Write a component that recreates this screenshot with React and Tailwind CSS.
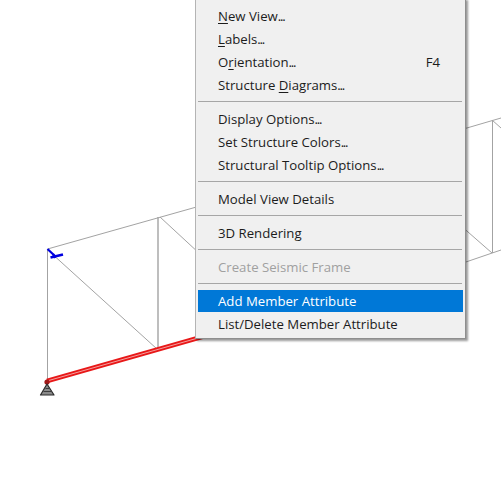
function Row({ children, right, tone = "text-[#1c1c1c]", bg = "", h = "h-[23px]" }) {
  return (
    <div className={`${h} flex items-center justify-between pl-5 pr-[23px] ${tone} ${bg}`}>
      <span>{children}</span>
      {right ? <span>{right}</span> : null}
    </div>
  );
}

function Sep() {
  return <div className="h-px bg-[#a6a6a6] mt-[4px] mb-[6px] mr-[1px]" />;
}

function U({ children }) {
  return <span className="underline underline-offset-2 decoration-1">{children}</span>;
}

function Dots() {
  return <span className="tracking-[-1.3px]">...</span>;
}

function Drawing() {
  return (
    <svg width="501" height="479" viewBox="0 0 501 479" className="block">
      <g stroke="#a3a3a3" strokeWidth="1" fill="none">
        <path d="M47.5 249V381" />
        <path d="M47.5 249L200 206" />
        <path d="M158 217V349" strokeWidth="1.4" />
        <path d="M50 252L157 349" />
        <path d="M160 217L200 254" />
        <path d="M460 130L501 118" />
        <path d="M492.5 120V253" />
        <path d="M460 225L492 253" />
        <path d="M460 264L501 250" />
        <path d="M492 120L501 128" />
      </g>
      <path d="M47 381L205 336" stroke="#e81818" strokeWidth="4.8" fill="none" />
      <path d="M47 381L205 336" stroke="#f5b0b0" strokeWidth="0.9" fill="none" />
      <circle cx="47" cy="382" r="2.6" fill="#a01818" />
      <g stroke="#0000e0" fill="none">
        <path d="M47.5 249L56 257" strokeWidth="2.2" />
        <path d="M50.5 257.5L63 254.5" strokeWidth="2.8" />
        <path d="M53 254L55 258" strokeWidth="2.2" />
      </g>
      <path d="M47 384L40.5 395H54Z" fill="#8a8a8a" stroke="#2a2a2a" strokeWidth="1.2" strokeLinejoin="round" />
      <path d="M43.5 391.5H51M45.5 388.5H49.5" stroke="#3c3c3c" strokeWidth="1" />
    </svg>
  );
}

export default function App() {
  return (
    <div className="relative w-[501px] h-[479px] bg-white overflow-hidden">
      <Drawing />
      <div
        className="absolute left-[195px] top-[-2px] w-[271px] pt-[6px] pb-[2px] px-[2px] bg-[#f0f0f0] border border-[#b4b4b4] border-r-[#8e8e8e] border-b-[#8e8e8e] shadow-[2px_2px_2px_rgba(0,0,0,0.4)] text-[13.2px] leading-[23px]"
        style={{ fontFamily: '"Open Sans", "Noto Sans", sans-serif' }}
      >
        <Row><U>N</U>ew View<Dots /></Row>
        <Row><U>L</U>abels<Dots /></Row>
        <Row right="F4">O<U>r</U>ientation<Dots /></Row>
        <Row>Structure <U>D</U>iagrams<Dots /></Row>
        <Sep />
        <Row>Display Options<Dots /></Row>
        <Row>Set Structure Colors<Dots /></Row>
        <Row>Structural Tooltip Options<Dots /></Row>
        <Sep />
        <Row>Model View Details</Row>
        <Sep />
        <Row>3D Rendering</Row>
        <Sep />
        <Row tone="text-[#a0a0a0]">Create Seismic Frame</Row>
        <Sep />
        <Row tone="text-white" bg="bg-[#0078d7]" h="h-[22px]">Add Member Attribute</Row>
        <div className="h-px" />
        <Row>List/Delete Member Attribute</Row>
      </div>
    </div>
  );
}
